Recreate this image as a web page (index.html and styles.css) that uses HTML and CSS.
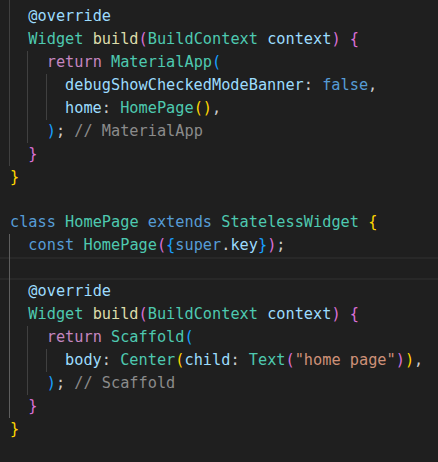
FILE: index.html
```html
<!DOCTYPE html>
<html>
<head>
<meta charset="utf-8">
<link rel="stylesheet" href="styles.css">
</head>
<body>
<div class="editor">
  <div class="line top"><span class="ind g"></span></div>
  <div class="line"><span class="ind g"></span><span class="code"><span class="an">@override</span></span></div>
  <div class="line"><span class="ind g"></span><span class="code"><span class="t">Widget</span> <span class="f">build</span><span class="b2">(</span><span class="t">BuildContext</span> <span class="v">context</span><span class="b2">)</span> <span class="b2">{</span></span></div>
  <div class="line"><span class="ind g"></span><span class="ind g"></span><span class="code"><span class="c">return</span> <span class="t">MaterialApp</span><span class="b3">(</span></span></div>
  <div class="line"><span class="ind g"></span><span class="ind g"></span><span class="ind g"></span><span class="code"><span class="v">debugShowCheckedModeBanner</span>: <span class="k">false</span>,</span></div>
  <div class="line"><span class="ind g"></span><span class="ind g"></span><span class="ind g"></span><span class="code"><span class="v">home</span>: <span class="t">HomePage</span><span class="b1">()</span>,</span></div>
  <div class="line"><span class="ind g"></span><span class="ind g"></span><span class="code"><span class="b3">)</span>; <span class="lbl">// MaterialApp</span></span></div>
  <div class="line"><span class="ind g"></span><span class="code"><span class="b2">}</span></span></div>
  <div class="line"><span class="code"><span class="b1">}</span></span></div>
  <div class="line"></div>
  <div class="line"><span class="code"><span class="k">class</span> <span class="t">HomePage</span> <span class="k">extends</span> <span class="t">StatelessWidget</span> <span class="b1">{</span></span></div>
  <div class="line"><span class="ind ga"></span><span class="code"><span class="k">const</span> <span class="t">HomePage</span><span class="b2">(</span><span class="b3">{</span><span class="k">super</span>.<span class="v">key</span><span class="b3">}</span><span class="b2">)</span>;</span></div>
  <div class="line cur"><span class="ind ga"></span></div>
  <div class="line"><span class="ind ga"></span><span class="code"><span class="an">@override</span></span></div>
  <div class="line"><span class="ind ga"></span><span class="code"><span class="t">Widget</span> <span class="f">build</span><span class="b2">(</span><span class="t">BuildContext</span> <span class="v">context</span><span class="b2">)</span> <span class="b2">{</span></span></div>
  <div class="line"><span class="ind ga"></span><span class="ind g"></span><span class="code"><span class="c">return</span> <span class="t">Scaffold</span><span class="b3">(</span></span></div>
  <div class="line"><span class="ind ga"></span><span class="ind g"></span><span class="ind g"></span><span class="code"><span class="v">body</span>: <span class="t">Center</span><span class="b1">(</span><span class="v">child</span>: <span class="t">Text</span><span class="b2">(</span><span class="s">"home page"</span><span class="b2">)</span><span class="b1">)</span>,</span></div>
  <div class="line"><span class="ind ga"></span><span class="ind g"></span><span class="code"><span class="b3">)</span>; <span class="lbl">// Scaffold</span></span></div>
  <div class="line"><span class="ind ga"></span><span class="code"><span class="b2">}</span></span></div>
  <div class="line"><span class="code"><span class="b1">}</span></span></div>
</div>
</body>
</html>
```

FILE: styles.css
```css
html, body {
  margin: 0;
  padding: 0;
  background: #1f1f1f;
}

.editor {
  font-family: "DejaVu Sans Mono", "Liberation Mono", monospace;
  font-size: 15.25px;
  color: #cccccc;
  width: 438px;
  height: 462px;
  overflow: hidden;
}

.line {
  display: flex;
  align-items: stretch;
  height: 22.94px;
  line-height: 22.94px;
  padding-left: 10px;
  white-space: pre;
}

.line.top {
  height: 5px;
}

.line.cur {
  box-shadow: inset 0 2px 0 #282828, inset 0 -2px 0 #282828;
}

.ind {
  flex: none;
  width: 2ch;
}

.ind.g {
  box-shadow: -1px 0 0 #404040;
}

.ind.ga {
  box-shadow: -1px 0 0 #5e5e5e;
}

.code {
  white-space: pre;
}

.an { color: #9cdcfe; }
.k { color: #569cd6; }
.c { color: #c586c0; }
.t { color: #4ec9b0; }
.f { color: #dcdcaa; }
.v { color: #9cdcfe; }
.s { color: #ce9178; }
.lbl { color: #8b8b8b; }
.b1 { color: #ffd700; }
.b2 { color: #da70d6; }
.b3 { color: #179fff; }
```
